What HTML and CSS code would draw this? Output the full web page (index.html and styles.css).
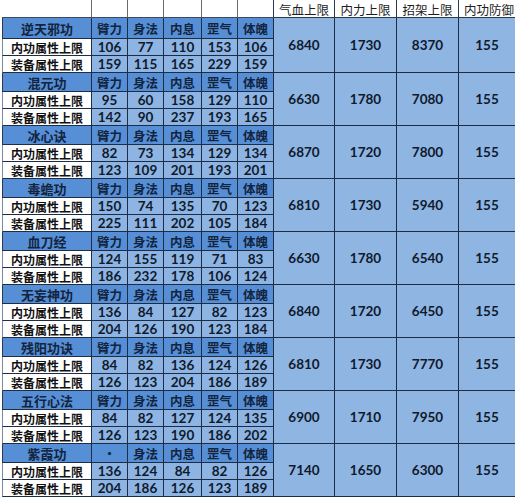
FILE: index.html
```html
<!DOCTYPE html>
<html lang="zh">
<head>
<meta charset="utf-8">
<link rel="stylesheet" href="styles.css">
</head>
<body>
<div class="sheet" id="sheet">
  <div class="blank"></div><div class="blank"></div><div class="blank"></div><div class="blank"></div><div class="blank"></div><div class="blank last"></div>
  <div class="colhead">气血上限</div><div class="colhead">内力上限</div><div class="colhead">招架上限</div><div class="colhead end">内功防御</div>
</div>
<script src="app.js"></script>
</body>
</html>
```

FILE: styles.css
```css
html, body {
  margin: 0;
  padding: 0;
  background: #ffffff;
}
body {
  font-family: "Lato", "Noto Sans CJK SC", sans-serif;
  color: #101a2c;
}
.sheet {
  display: grid;
  margin-left: 2px;
  width: 517px;
  grid-template-columns: 90px 36px 36px 38px 36px 36px 61px 62px 62px 56px;
  grid-template-rows: 18px 21px 17px 17px repeat(8, 19px 17px 17px);
}
.sheet > div {
  box-sizing: border-box;
  display: flex;
  align-items: center;
  justify-content: center;
  white-space: nowrap;
}
.blank {
  border-right: 1px solid #6b6b6b;
  border-bottom: 1px solid #3a4a60;
}
.blank.last {
  border-right: 1px solid #2a3a52;
}
.colhead {
  font-family: "Noto Sans CJK SC", sans-serif;
  font-size: 12.5px;
  font-weight: 400;
  color: #1e1e1e;
  border-right: 1px solid #2a3a52;
  border-bottom: 1px solid #2a3a52;
  padding-top: 1px;
}
.colhead.end {
  border-right: none;
  padding-left: 4px;
}
.name {
  background: #568fd6;
  font-family: "Noto Sans CJK SC", sans-serif;
  font-weight: 700;
  font-size: 13px;
  color: #13243e;
  border-left: 1px solid #2a3a52;
  border-right: 1px solid #1d2d45;
  border-bottom: 1px solid #1d2d45;
}
.stat {
  background: #568fd6;
  font-family: "Noto Sans CJK SC", sans-serif;
  font-weight: 700;
  font-size: 12.5px;
  color: #13243e;
  border-right: 1px solid #1d2d45;
  border-bottom: 1px solid #1d2d45;
}
.label {
  background: #ffffff;
  font-family: "Noto Sans CJK SC", sans-serif;
  font-weight: 700;
  font-size: 12px;
  color: #111111;
  border-left: 1px solid #7a8aa0;
  border-right: 1px solid #1d2d45;
  border-bottom: 1px solid #1d2d45;
}
.num {
  background: #8db4e2;
  font-weight: 700;
  font-size: 13.5px;
  color: #101a2c;
  border-right: 1px solid #1d2d45;
  border-bottom: 1px solid #1d2d45;
}
.big {
  grid-row: span 3;
  background: #8fb5e3;
  font-weight: 700;
  font-size: 13.5px;
  color: #101a2c;
  border-right: 1px solid #1d2d45;
  border-bottom: 1px solid #1d2d45;
}
.big.end {
  border-right: none;
}
```

FILE: app.js
```js
const data = [
  ["逆天邪功", ["臂力","身法","内息","罡气","体魄"], [106,77,110,153,106], [159,115,165,229,159], [6840,1730,8370,155]],
  ["混元功", ["臂力","身法","内息","罡气","体魄"], [95,60,158,129,110], [142,90,237,193,165], [6630,1780,7080,155]],
  ["冰心诀", ["臂力","身法","内息","罡气","体魄"], [82,73,134,129,134], [123,109,201,193,201], [6870,1720,7800,155]],
  ["毒蟾功", ["臂力","身法","内息","罡气","体魄"], [150,74,135,70,123], [225,111,202,105,184], [6810,1730,5940,155]],
  ["血刀经", ["臂力","身法","内息","罡气","体魄"], [124,155,119,71,83], [186,232,178,106,124], [6630,1780,6540,155]],
  ["无妄神功", ["臂力","身法","内息","罡气","体魄"], [136,84,127,82,123], [204,126,190,123,184], [6840,1720,6450,155]],
  ["残阳功诀", ["臂力","身法","内息","罡气","体魄"], [84,82,136,124,126], [126,123,204,186,189], [6810,1730,7770,155]],
  ["五行心法", ["臂力","身法","内息","罡气","体魄"], [84,82,127,124,135], [126,123,190,186,202], [6900,1710,7950,155]],
  ["紫霞功", ["·","身法","内息","罡气","体魄"], [136,124,84,82,126], [204,186,126,123,189], [7140,1650,6300,155]]
];
const sheet = document.getElementById("sheet");
function cell(cls, text) {
  const d = document.createElement("div");
  d.className = cls;
  d.textContent = text;
  sheet.appendChild(d);
}
data.forEach(([name, heads, r1, r2, big]) => {
  cell("name", name);
  heads.forEach(h => cell("stat", h));
  big.forEach((b, i) => cell(i === 3 ? "big end" : "big", b));
  cell("label", "内功属性上限");
  r1.forEach(v => cell("num", v));
  cell("label", "装备属性上限");
  r2.forEach(v => cell("num", v));
});
```
